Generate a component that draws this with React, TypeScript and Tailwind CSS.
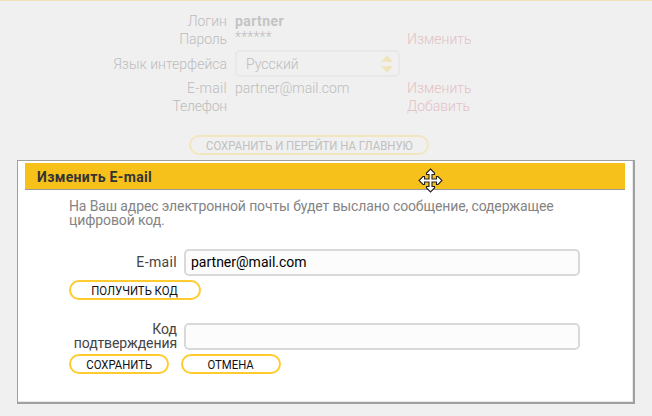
import type { ReactNode } from "react";

function Row({ label, children, action, height }: { label: ReactNode; children?: ReactNode; action?: ReactNode; height: string }) {
  return (
    <div className={`flex items-center ${height}`}>
      <div className="flex w-[227px] shrink-0 justify-end">{label}</div>
      <div className="ml-2 w-[172px] shrink-0">{children}</div>
      <a className="text-[#e4c0c5]">{action}</a>
    </div>
  );
}

function Pill({ children, width }: { children: ReactNode; width: string }) {
  return (
    <button className={`flex h-5 items-center justify-center rounded-full border-2 border-[#ffcb2e] bg-white text-[13.5px] text-[#111] ${width}`}>
      <span className="inline-block scale-x-[0.84] leading-4">{children}</span>
    </button>
  );
}

function MoveCursor() {
  return (
    <svg className="absolute left-[393px] top-[5px]" width="25" height="25" viewBox="0 0 25 25">
      <path
        d="M12.5 1 L16.5 5 V6.5 H14 V11 H18.5 V8.5 H20 L24 12.5 L20 16.5 H18.5 V14 H14 V18.5 H16.5 V20 L12.5 24 L8.5 20 V18.5 H11 V14 H6.5 V16.5 H5 L1 12.5 L5 8.5 H6.5 V11 H11 V6.5 H8.5 V5 Z"
        fill="#fff"
        stroke="#222"
        strokeWidth="1.1"
      />
    </svg>
  );
}

export default function App() {
  return (
    <div className="h-[416px] w-[652px] overflow-hidden whitespace-nowrap border-t border-[#f0e3ba] bg-[#f0f0f0] font-['Roboto','Noto_Sans',sans-serif] text-[14px] leading-[18px] text-[#bcbcbc]">
      <div className="pt-[11px] font-light">
        <Row height="h-[18px]" label={<span>Логин</span>}>
          <b className="font-bold tracking-[0.4px] text-[#c4c4c4]">partner</b>
        </Row>
        <Row height="h-[18px]" label={<span className="tracking-[-0.1px]">Пароль</span>} action="Изменить">
          <span className="block pb-1 leading-[14px] tracking-[0.2px]">******</span>
        </Row>
        <Row height="h-[31px]" label={<span>Язык интерфейса</span>}>
          <div className="flex h-[27px] w-[165px] items-center justify-between rounded-[5px] border-2 border-[#e8e8e8] pl-[9px] pr-[5px]">
            <span>Русский</span>
            <svg width="12" height="18" viewBox="0 0 12 18" fill="#f0e4bd">
              <path d="M6 0L12 7H0ZM0 11H12L6 18Z" />
            </svg>
          </div>
        </Row>
        <Row height="h-[18px]" label={<span className="tracking-[0.3px]">E-mail</span>} action="Изменить">
          <span>partner@mail.com</span>
        </Row>
        <Row height="h-[18px]" label={<span className="tracking-[-0.2px]">Телефон</span>} action="Добавить" />
      </div>
      <button className="ml-[189px] mt-[20px] flex h-5 w-[240px] items-center justify-center rounded-full border-2 border-[#f2e6bf] text-[13.5px] text-[#c0c0c0]">
        <span className="inline-block scale-x-[0.845] leading-4">СОХРАНИТЬ И ПЕРЕЙТИ НА ГЛАВНУЮ</span>
      </button>

      <div className="ml-[17px] mt-[5px] h-[244px] w-[618px] border-b-2 border-l border-r-2 border-t border-[#a0a0a0] bg-white">
        <div className="h-full border-b border-r border-[#e9e9e9] pl-[7px] pt-[2px]">
          <div className="relative flex h-[27px] w-[600px] items-center border-b border-[#999] bg-[#f6c11b] pl-[12px] text-[14px] font-bold text-[#333]">
            <span className="pt-px tracking-[0.35px]">Изменить E-mail</span>
            <MoveCursor />
          </div>
          <div className="ml-[44px] w-[511px] text-[#444]">
            <p className="pt-[9px] leading-[14px] text-[#848484]">
              <span className="tracking-[-0.12px]">На Ваш адрес электронной почты будет выслано сообщение, содержащее</span>
              <br />
              <span className="tracking-[-0.1px]">цифровой код.</span>
            </p>
            <div className="mt-[22px] flex h-[27px] items-center">
              <label className="flex w-[108px] justify-end pb-px">
                <span className="tracking-[0.35px]">E-mail</span>
              </label>
              <div className="ml-[7px] flex h-[27px] w-[396px] items-center rounded-[5px] border-2 border-[#d9d9d9] bg-[#fcfcfc] pb-px pl-[5px] text-black">
                <span>partner@mail.com</span>
              </div>
            </div>
            <div className="mt-1">
              <Pill width="w-[132px]">ПОЛУЧИТЬ КОД</Pill>
            </div>
            <div className="mt-[23px] flex h-[27px] items-center">
              <label className="flex w-[108px] flex-col items-end pb-px leading-[14px]">
                <span>Код</span>
                <span className="tracking-[-0.08px]">подтверждения</span>
              </label>
              <div className="ml-[7px] h-[27px] w-[396px] rounded-[5px] border-2 border-[#d9d9d9] bg-[#fcfcfc]" />
            </div>
            <div className="mt-1 flex gap-3">
              <Pill width="w-[100px]">СОХРАНИТЬ</Pill>
              <Pill width="w-[100px]">ОТМЕНА</Pill>
            </div>
          </div>
        </div>
      </div>
    </div>
  );
}
